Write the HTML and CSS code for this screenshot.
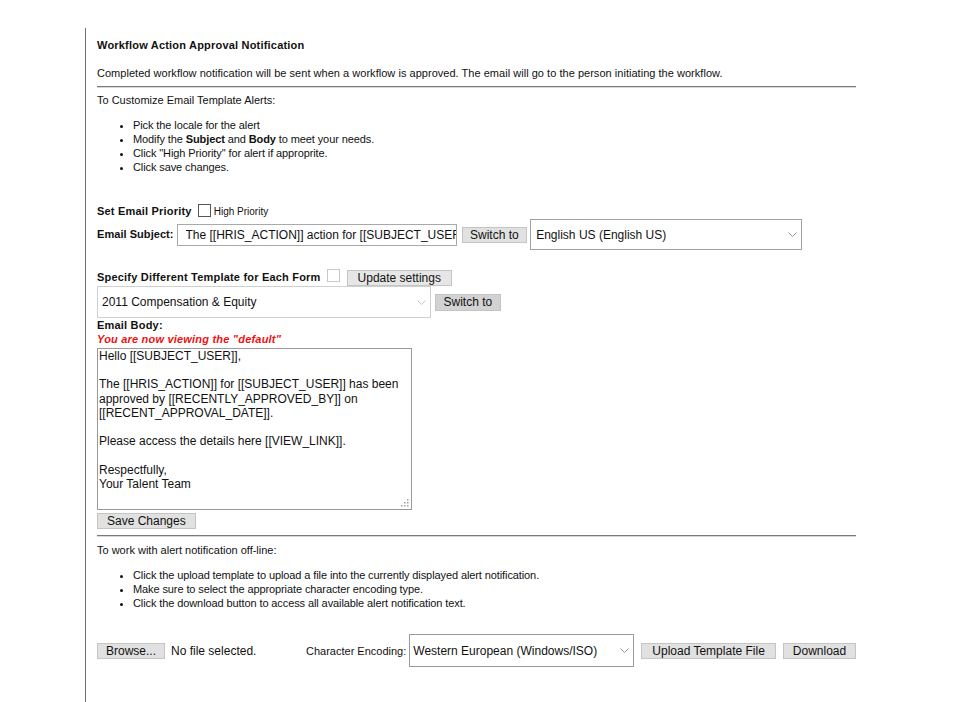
FILE: index.html
```html
<!DOCTYPE html>
<html>
<head>
<meta charset="utf-8">
<link rel="stylesheet" href="styles.css">
</head>
<body>
<div class="page">
  <div class="title">Workflow Action Approval Notification</div>
  <div class="desc">Completed workflow notification will be sent when a workflow is approved. The email will go to the person initiating the workflow.</div>
  <div class="rule rule-top"></div>
  <div class="intro">To Customize Email Template Alerts:</div>
  <ul class="steps steps-top">
    <li>Pick the locale for the alert</li>
    <li>Modify the <b>Subject</b> and <b>Body</b> to meet your needs.</li>
    <li>Click "High Priority" for alert if approprite.</li>
    <li>Click save changes.</li>
  </ul>

  <div class="row priority-row">
    <span class="label">Set Email Priority</span>
    <input type="checkbox" class="check">
    <span class="small">High Priority</span>
  </div>

  <div class="row subject-row">
    <span class="label label-tight">Email Subject:</span>
    <input type="text" class="subject" value="The [[HRIS_ACTION]] action for [[SUBJECT_USER]]">
    <button class="btn btn-switch">Switch to</button>
    <div class="select select-locale">
      <span>English US (English US)</span>
      <svg width="9" height="5" viewBox="0 0 9 5"><polyline points="0.5,0.5 4.5,4.5 8.5,0.5" fill="none" stroke="#888" stroke-width="0.9"/></svg>
    </div>
  </div>

  <div class="row specify-row">
    <span class="label">Specify Different Template for Each Form</span>
    <input type="checkbox" class="check check-light">
    <button class="btn btn-light btn-update">Update settings</button>
  </div>

  <div class="row form-row">
    <div class="select select-form">
      <span>2011 Compensation &amp; Equity</span>
      <svg width="9" height="5" viewBox="0 0 9 5"><polyline points="0.5,0.5 4.5,4.5 8.5,0.5" fill="none" stroke="#c4c4c4" stroke-width="0.9"/></svg>
    </div>
    <button class="btn btn-dark btn-switch">Switch to</button>
  </div>

  <div class="label body-label">Email Body:</div>
  <div class="viewing">You are now viewing the "default"</div>
  <div class="body-wrap">
    <textarea class="body">Hello [[SUBJECT_USER]],

The [[HRIS_ACTION]] for [[SUBJECT_USER]] has been
approved by [[RECENTLY_APPROVED_BY]] on
[[RECENT_APPROVAL_DATE]].

Please access the details here [[VIEW_LINK]].

Respectfully,
Your Talent Team</textarea>
    <svg class="grip" width="8" height="8" viewBox="0 0 8 8">
      <rect x="6" y="0" width="1.5" height="1.5" fill="#a0a0a0"/>
      <rect x="3" y="3" width="1.5" height="1.5" fill="#a0a0a0"/>
      <rect x="6" y="3" width="1.5" height="1.5" fill="#a0a0a0"/>
      <rect x="0" y="6" width="1.5" height="1.5" fill="#a0a0a0"/>
      <rect x="3" y="6" width="1.5" height="1.5" fill="#a0a0a0"/>
      <rect x="6" y="6" width="1.5" height="1.5" fill="#a0a0a0"/>
    </svg>
  </div>
  <div class="save-wrap"><button class="btn btn-save">Save Changes</button></div>

  <div class="rule rule-mid"></div>
  <div class="intro intro-bottom">To work with alert notification off-line:</div>
  <ul class="steps steps-bottom">
    <li>Click the upload template to upload a file into the currently displayed alert notification.</li>
    <li>Make sure to select the appropriate character encoding type.</li>
    <li>Click the download button to access all available alert notification text.</li>
  </ul>

  <div class="row upload-row">
    <button class="btn btn-browse">Browse...</button>
    <span class="nofile">No file selected.</span>
    <span class="enc-label">Character Encoding:</span>
    <div class="select select-enc">
      <span>Western European (Windows/ISO)</span>
      <svg width="9" height="5" viewBox="0 0 9 5"><polyline points="0.5,0.5 4.5,4.5 8.5,0.5" fill="none" stroke="#888" stroke-width="0.9"/></svg>
    </div>
    <button class="btn btn-upload">Upload Template File</button>
    <button class="btn btn-download">Download</button>
  </div>
</div>
</body>
</html>
```

FILE: styles.css
```css
html, body {
  margin: 0;
  padding: 0;
  background: #fff;
}
body {
  font-family: "Liberation Sans", Arial, sans-serif;
  font-size: 11px;
  color: #111;
}
.page {
  margin-left: 85px;
  margin-top: 28px;
  border-left: 1px solid #6e6e6e;
  min-height: 674px;
  padding-left: 11px;
  padding-top: 11px;
  width: 759px;
  box-sizing: content-box;
}
.title {
  font-weight: bold;
  line-height: 13px;
  letter-spacing: 0.2px;
}
.desc {
  margin-top: 15px;
  line-height: 13px;
  letter-spacing: 0.03px;
}
.rule {
  height: 0;
  border-top: 1px solid #7a7a7a;
  border-bottom: 1px solid #d8d8d8;
}
.rule-top { margin-top: 6px; }
.rule-mid { margin-top: 6px; }
.intro {
  margin-top: 6px;
  line-height: 13px;
}
.intro-bottom { margin-top: 7px; }
.steps {
  margin: 0;
  padding-left: 36px;
  line-height: 14px;
  letter-spacing: -0.1px;
}
.steps-top { margin-top: 11px; }
.steps-bottom { margin-top: 11px; }
.row {
  display: flex;
  align-items: center;
  white-space: nowrap;
}
.row > * {
  flex-shrink: 0;
}
.label {
  font-weight: bold;
  line-height: 13px;
  letter-spacing: 0.2px;
}
.label-tight { letter-spacing: 0.05px; }
.priority-row {
  margin-top: 30px;
  height: 15px;
}
.check {
  -webkit-appearance: none;
  appearance: none;
  width: 13px;
  height: 13px;
  margin: -3px 3px 0 6px;
  border: 1px solid #555;
  background: #fff;
  box-sizing: border-box;
}
.check-light {
  border-color: #c8c8c8;
  margin: -4px 7px 0 6px;
}
.small {
  font-size: 10px;
}
.subject-row {
  height: 31px;
}
.subject {
  width: 280px;
  height: 22px;
  box-sizing: border-box;
  margin: 0 5px 0 3px;
  padding: 0 0 0 8px;
  border: 1px solid #a9a9a9;
  font-family: "Liberation Sans", Arial, sans-serif;
  font-size: 12px;
  color: #111;
  outline: none;
}
.btn {
  font-family: "Liberation Sans", Arial, sans-serif;
  font-size: 12px;
  line-height: 14px;
  height: 16px;
  padding: 0 9px;
  margin: 0;
  background: #e1e1e1;
  border: 1px solid #c4c4c4;
  color: #111;
  box-sizing: border-box;
  white-space: nowrap;
}
.btn-switch { padding: 0 7.5px; }
.btn-update { padding: 0 10px; }
.btn-browse { padding: 0 8px; }
.btn-upload { padding: 0 10px; }
.btn-light { background: #e6e6e6; }
.btn-dark { background: #d2d2d2; height: 17px; }
.select {
  display: flex;
  align-items: center;
  justify-content: space-between;
  box-sizing: border-box;
  border: 1px solid #a0a0a0;
  background: #fff;
  font-size: 12px;
  color: #111;
}
.select-locale {
  width: 272px;
  height: 31px;
  margin-left: 3px;
  padding: 0 4px 0 5px;
}
.specify-row {
  margin-top: 19px;
  height: 17px;
}
.form-row {
  margin-top: 0;
  height: 32px;
}
.select-form {
  width: 334px;
  height: 32px;
  border-color: #d0d0d0;
  padding: 0 4px 0 4px;
  margin-right: 4px;
}
.body-label {
  margin-top: 1px;
}
.viewing {
  color: #ee1111;
  font-weight: bold;
  font-style: italic;
  line-height: 13px;
  margin-top: 1px;
  letter-spacing: 0.2px;
}
.body-wrap {
  position: relative;
  width: 315px;
  margin-top: 2px;
}
.body {
  display: block;
  margin: 0;
  width: 315px;
  height: 162px;
  box-sizing: border-box;
  border: 1px solid #9a9a9a;
  padding: 0 1px;
  font-family: "Liberation Sans", Arial, sans-serif;
  font-size: 12px;
  line-height: 14.2px;
  color: #111;
  resize: none;
  outline: none;
  overflow: hidden;
}
.grip {
  position: absolute;
  right: 3px;
  bottom: 3px;
}
.save-wrap {
  margin-top: 3px;
  display: flex;
}
.upload-row {
  margin-top: 24px;
  height: 33px;
}
.nofile {
  font-size: 12px;
  margin-left: 6px;
  width: 135px;
}
.enc-label {
  margin-right: 3px;
}
.select-enc {
  width: 225px;
  height: 33px;
  border-color: #9a9a9a;
  padding: 0 4px 0 3px;
  margin-right: 7px;
}
.btn-download { margin-left: 7px; }
```
